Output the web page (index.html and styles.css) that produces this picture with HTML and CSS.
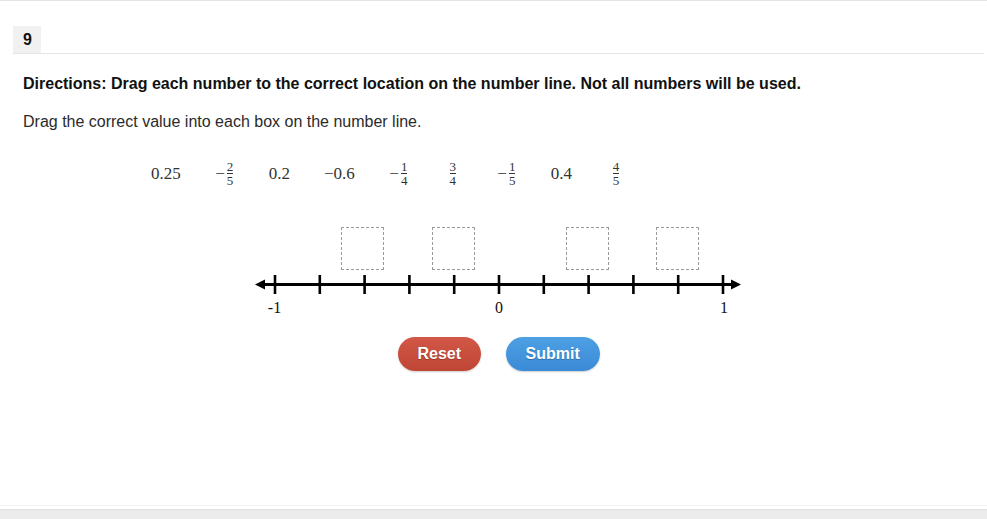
FILE: index.html
```html
<!DOCTYPE html>
<html lang="en">
<head>
<meta charset="utf-8">
<title>Question 9</title>
<link rel="stylesheet" href="styles.css">
</head>
<body>
<div class="page">
  <main class="question">
    <div class="qhead"><span class="qnum">9</span></div>
    <p class="directions">Directions: Drag each number to the correct location on the number line. Not all numbers will be used.</p>
    <p class="prompt">Drag the correct value into each box on the number line.</p>

    <div class="tiles">
      <span class="tile">0.25</span>
      <span class="tile"><span class="minus">−</span><span class="frac"><span class="num">2</span><span class="den">5</span></span></span>
      <span class="tile">0.2</span>
      <span class="tile">−0.6</span>
      <span class="tile"><span class="minus">−</span><span class="frac"><span class="num">1</span><span class="den">4</span></span></span>
      <span class="tile"><span class="frac"><span class="num">3</span><span class="den">4</span></span></span>
      <span class="tile"><span class="minus">−</span><span class="frac"><span class="num">1</span><span class="den">5</span></span></span>
      <span class="tile">0.4</span>
      <span class="tile"><span class="frac"><span class="num">4</span><span class="den">5</span></span></span>
    </div>

    <div class="numberline">
      <svg class="nl-svg" width="501" height="95" viewBox="0 0 501 95" aria-label="Number line from -1 to 1">
        <line x1="14" y1="62.5" x2="486" y2="62.5" stroke="#000" stroke-width="3"/>
        <polygon points="7,62.5 17,57.5 17,67.5" fill="#000"/>
        <polygon points="493,62.5 483,57.5 483,67.5" fill="#000"/>
        <g stroke="#000" stroke-width="2.6">
          <line x1="27" y1="53" x2="27" y2="72"/>
          <line x1="71.8" y1="53" x2="71.8" y2="72"/>
          <line x1="116.6" y1="53" x2="116.6" y2="72"/>
          <line x1="161.4" y1="53" x2="161.4" y2="72"/>
          <line x1="206.2" y1="53" x2="206.2" y2="72"/>
          <line x1="251" y1="53" x2="251" y2="72"/>
          <line x1="295.8" y1="53" x2="295.8" y2="72"/>
          <line x1="340.6" y1="53" x2="340.6" y2="72"/>
          <line x1="385.4" y1="53" x2="385.4" y2="72"/>
          <line x1="430.2" y1="53" x2="430.2" y2="72"/>
          <line x1="475" y1="53" x2="475" y2="72"/>
        </g>
        <g class="nl-label" text-anchor="middle">
          <text x="26.5" y="91">-1</text>
          <text x="251" y="91">0</text>
          <text x="476" y="91">1</text>
        </g>
      </svg>
      <div class="drop" style="left:93px"></div>
      <div class="drop" style="left:184px"></div>
      <div class="drop" style="left:318px"></div>
      <div class="drop" style="left:408px"></div>
    </div>

    <div class="actions">
      <button class="btn btn-reset" type="button">Reset</button>
      <button class="btn btn-submit" type="button">Submit</button>
    </div>
  </main>
  <footer class="footer"></footer>
</div>
</body>
</html>
```

FILE: styles.css
```css
* { box-sizing: border-box; }

html, body {
  margin: 0;
  padding: 0;
  background: #ffffff;
}

body {
  font-family: "Liberation Sans", Arial, sans-serif;
  color: #000;
}

.page {
  min-height: 100vh;
  display: flex;
  flex-direction: column;
  border-top: 1px solid #e3e3e3;
}

.question {
  flex: 1;
  margin-left: 13px;
  width: 971px;
}

.qhead {
  margin-top: 25px;
  border-bottom: 1px solid #e4e4e4;
  display: flex;
}

.qnum {
  display: block;
  width: 28px;
  height: 27px;
  padding-left: 10px;
  background: #f1f1f1;
  font-weight: bold;
  font-size: 16px;
  line-height: 27px;
  color: #111;
}

.directions {
  margin: 20px 0 0;
  padding-left: 10px;
  font-size: 16px;
  line-height: 20px;
  font-weight: bold;
  color: #111;
}

.prompt {
  margin: 18px 0 0;
  padding-left: 10px;
  font-size: 16px;
  line-height: 20px;
  color: #2b2b2b;
}

.tiles {
  margin-top: 27px;
  padding-left: 138px;
  height: 30px;
  display: flex;
  align-items: center;
  gap: 34px;
  font-family: "Liberation Serif", "Times New Roman", serif;
  font-size: 17px;
  color: #333;
}

.tile {
  display: inline-flex;
  align-items: center;
  justify-content: center;
  min-width: 20px;
  height: 30px;
  white-space: nowrap;
}

.minus {
  margin-right: 1px;
}

.frac {
  display: inline-flex;
  flex-direction: column;
  align-items: stretch;
  font-size: 13px;
  line-height: 10px;
  text-align: center;
  padding: 0 1px;
}

.frac .num {
  display: block;
  padding-bottom: 1px;
  border-bottom: 1px solid #333;
}

.frac .den {
  display: block;
  padding-top: 2px;
}

.numberline {
  position: relative;
  width: 501px;
  height: 95px;
  margin: 33px auto 0;
}

.nl-svg {
  display: block;
}

.nl-label {
  font-family: "Liberation Serif", "Times New Roman", serif;
  font-size: 16px;
  fill: #111;
}

.drop {
  position: absolute;
  top: 5px;
  width: 43px;
  height: 43px;
  border: 1px dashed #9a9a9a;
  background: transparent;
}

.actions {
  margin-top: 20px;
  display: flex;
  justify-content: center;
  gap: 25px;
}

.btn {
  height: 34px;
  padding: 0 20px;
  border: none;
  border-radius: 17px;
  font-family: "Liberation Sans", Arial, sans-serif;
  font-weight: bold;
  font-size: 16px;
  color: #fff;
  text-shadow: 0 1px 1px rgba(0, 0, 0, 0.25);
  cursor: pointer;
}

.btn-reset {
  width: 83px;
  background: linear-gradient(#d25746, #bf4534);
  box-shadow: 0 1px 2px rgba(0, 0, 0, 0.2);
}

.btn-submit {
  width: 94px;
  background: linear-gradient(#4ea0e4, #3a8ad6);
  box-shadow: 0 1px 2px rgba(0, 0, 0, 0.2);
}

.footer {
  height: 14px;
  border-top: 1px solid #f3f3f3;
  background: linear-gradient(#ffffff 0, #ffffff 3px, #e2e2e2 3px, #e2e2e2 4px, #ececec 4px);
}
```
